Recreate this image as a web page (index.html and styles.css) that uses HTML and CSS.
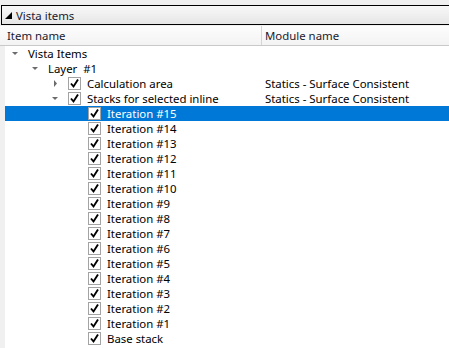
FILE: index.html
```html
<!doctype html>
<html lang="en">
  <head>
    <meta charset="UTF-8" />
    <title>Vista items</title>
    <link rel="stylesheet" href="styles.css">
  </head>
  <body>
    <div class="panel">
      <div class="group-header">
        <svg class="corner" width="7" height="7" viewBox="0 0 7 7"><path d="M7 0 L7 7 L0 7 Z" fill="#000"/></svg>
        <span>Vista items</span>
      </div>
      <div class="tree">
        <div class="columns">
          <div class="col col-first">Item name</div>
          <div class="col">Module name</div>
        </div>

        <div class="row">
          <div class="cell lvl0">
            <svg class="arrow" width="16" height="15" viewBox="0 0 16 15"><path d="M4 6 L10 6 L7 9 Z" fill="#6b6b6b"/></svg>
            <span class="label">Vista Items</span>
          </div>
          <div class="cell"></div>
        </div>
        <div class="row">
          <div class="cell lvl1">
            <svg class="arrow" width="16" height="15" viewBox="0 0 16 15"><path d="M4 6 L10 6 L7 9 Z" fill="#6b6b6b"/></svg>
            <span class="label">Layer &nbsp;#1</span>
          </div>
          <div class="cell"></div>
        </div>
        <div class="row">
          <div class="cell lvl2">
            <svg class="arrow" width="16" height="15" viewBox="0 0 16 15"><path d="M6 4 L9 7.5 L6 11 Z" fill="#6b6b6b"/></svg>
            <span class="check"><svg width="11" height="11" viewBox="0 0 11 11"><path d="M2 5.5 L4.5 8.5 L9 1.5" fill="none" stroke="#000" stroke-width="1.9"/></svg></span>
            <span class="label">Calculation area</span>
          </div>
          <div class="cell"><span class="label">Statics - Surface Consistent</span></div>
        </div>
        <div class="row">
          <div class="cell lvl2">
            <svg class="arrow" width="16" height="15" viewBox="0 0 16 15"><path d="M4 6 L10 6 L7 9 Z" fill="#6b6b6b"/></svg>
            <span class="check"><svg width="11" height="11" viewBox="0 0 11 11"><path d="M2 5.5 L4.5 8.5 L9 1.5" fill="none" stroke="#000" stroke-width="1.9"/></svg></span>
            <span class="label">Stacks for selected inline</span>
          </div>
          <div class="cell"><span class="label">Statics - Surface Consistent</span></div>
        </div>

        <div id="iterations"></div>
      </div>
    </div>

    <script>
      const names = [];
      for (let i = 15; i >= 1; i--) {
        names.push("Iteration #" + i);
      }
      names.push("Base stack");

      const list = document.getElementById("iterations");
      names.forEach((name, index) => {
        const row = document.createElement("div");
        row.className = index === 0 ? "row selected" : "row";
        row.innerHTML =
          '<div class="cell lvl3"><span class="arrow"></span>' +
          '<span class="check"><svg width="11" height="11" viewBox="0 0 11 11"><path d="M2 5.5 L4.5 8.5 L9 1.5" fill="none" stroke="#000" stroke-width="1.9"/></svg></span>' +
          '<span class="label">' + name + "</span></div>" +
          '<div class="cell"></div>';
        list.appendChild(row);
      });
    </script>
  </body>
</html>
```

FILE: styles.css
```css
body {
  margin: 0;
  padding: 0;
  background-color: #f0f0f0;
  font-family: "Noto Sans", sans-serif;
  font-size: 11.4px;
  color: #000;
  overflow: hidden;
}

.panel {
  padding-top: 5px;
}

.group-header {
  margin-left: 1px;
  height: 18px;
  border: 1px solid #000;
  border-right: none;
  background: linear-gradient(#f8f8f8, #e6e6e6);
  display: flex;
  align-items: center;
  padding-left: 3px;
  color: #1a1a2e;
}

.corner {
  margin-right: 4px;
  margin-top: 1px;
}

.tree {
  margin-top: 1px;
  margin-left: 5px;
  background-color: #fff;
  height: 330px;
}

.columns {
  display: grid;
  grid-template-columns: 257px 1fr;
  height: 19px;
  background: linear-gradient(#fdfdfd, #f3f3f3);
  border-bottom: 1px solid #c9c9c9;
  margin-left: -5px;
  padding-left: 5px;
}

.col {
  display: flex;
  align-items: center;
  padding-left: 3px;
  color: #1a1a2e;
}

.col-first {
  border-right: 1px solid #d5d5d5;
  padding-left: 2px;
}

.row {
  display: grid;
  grid-template-columns: 257px 1fr;
  height: 15px;
  white-space: nowrap;
}

.cell {
  display: flex;
  align-items: center;
  height: 15px;
  overflow: visible;
}

.label {
  display: inline-block;
  height: 15px;
  line-height: 15px;
  overflow: visible;
}

.cell + .cell {
  padding-left: 3px;
}

.lvl0 { padding-left: 3px; }
.lvl1 { padding-left: 23px; }
.lvl2 { padding-left: 43px; }
.lvl3 { padding-left: 63px; }

.arrow {
  display: inline-block;
  width: 16px;
  height: 15px;
  margin-right: 4px;
  flex-shrink: 0;
}

.check {
  box-sizing: border-box;
  width: 13px;
  height: 13px;
  border: 1px solid #a3a3a3;
  background-color: #fff;
  margin-right: 6px;
  display: flex;
  align-items: center;
  justify-content: center;
  flex-shrink: 0;
}

.selected {
  background-color: #0078d7;
  color: #fff;
}
```
